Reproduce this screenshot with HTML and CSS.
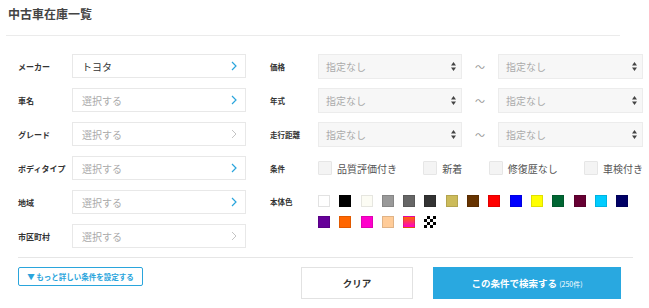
FILE: index.html
```html
<!DOCTYPE html>
<html lang="ja">
<head>
  <meta charset="UTF-8">
  <title>中古車在庫一覧</title>
  <link rel="stylesheet" href="styles.css">
</head>
<body>

  <div class="page-head">
    <h1>中古車在庫一覧</h1>
  </div>

  <form class="search-form">
    <div class="fields">

      <!-- left column -->
      <div class="col col-left">
        <div class="row">
          <span class="label">メーカー</span>
          <div class="picker">
            <span class="value">トヨタ</span>
            <svg class="chev" width="6" height="10" viewBox="0 0 6 10"><polyline points="1,1 5,5 1,9" fill="none" stroke="#2aa5dc" stroke-width="1.2"/></svg>
          </div>
        </div>
        <div class="row">
          <span class="label">車名</span>
          <div class="picker">
            <span class="placeholder">選択する</span>
            <svg class="chev" width="6" height="10" viewBox="0 0 6 10"><polyline points="1,1 5,5 1,9" fill="none" stroke="#2aa5dc" stroke-width="1.2"/></svg>
          </div>
        </div>
        <div class="row">
          <span class="label">グレード</span>
          <div class="picker">
            <span class="placeholder">選択する</span>
            <svg class="chev" width="6" height="10" viewBox="0 0 6 10"><polyline points="1,1 5,5 1,9" fill="none" stroke="#c4c4c4" stroke-width="1"/></svg>
          </div>
        </div>
        <div class="row">
          <span class="label">ボディタイプ</span>
          <div class="picker">
            <span class="placeholder">選択する</span>
            <svg class="chev" width="6" height="10" viewBox="0 0 6 10"><polyline points="1,1 5,5 1,9" fill="none" stroke="#2aa5dc" stroke-width="1.2"/></svg>
          </div>
        </div>
        <div class="row">
          <span class="label">地域</span>
          <div class="picker">
            <span class="placeholder">選択する</span>
            <svg class="chev" width="6" height="10" viewBox="0 0 6 10"><polyline points="1,1 5,5 1,9" fill="none" stroke="#2aa5dc" stroke-width="1.2"/></svg>
          </div>
        </div>
        <div class="row">
          <span class="label">市区町村</span>
          <div class="picker">
            <span class="placeholder">選択する</span>
            <svg class="chev" width="6" height="10" viewBox="0 0 6 10"><polyline points="1,1 5,5 1,9" fill="none" stroke="#c4c4c4" stroke-width="1"/></svg>
          </div>
        </div>
      </div>

      <!-- right column -->
      <div class="col col-right">
        <div class="row">
          <span class="label label-sm">価格</span>
          <div class="select">
            <span class="placeholder">指定なし</span>
            <svg class="updown" width="5" height="9" viewBox="0 0 5 9"><polygon points="2.5,0 5,3.5 0,3.5" fill="#444"/><polygon points="0,5.5 5,5.5 2.5,9" fill="#444"/></svg>
          </div>
          <span class="tilde">～</span>
          <div class="select select-wide">
            <span class="placeholder">指定なし</span>
            <svg class="updown" width="5" height="9" viewBox="0 0 5 9"><polygon points="2.5,0 5,3.5 0,3.5" fill="#444"/><polygon points="0,5.5 5,5.5 2.5,9" fill="#444"/></svg>
          </div>
        </div>
        <div class="row">
          <span class="label label-sm">年式</span>
          <div class="select">
            <span class="placeholder">指定なし</span>
            <svg class="updown" width="5" height="9" viewBox="0 0 5 9"><polygon points="2.5,0 5,3.5 0,3.5" fill="#444"/><polygon points="0,5.5 5,5.5 2.5,9" fill="#444"/></svg>
          </div>
          <span class="tilde">～</span>
          <div class="select select-wide">
            <span class="placeholder">指定なし</span>
            <svg class="updown" width="5" height="9" viewBox="0 0 5 9"><polygon points="2.5,0 5,3.5 0,3.5" fill="#444"/><polygon points="0,5.5 5,5.5 2.5,9" fill="#444"/></svg>
          </div>
        </div>
        <div class="row">
          <span class="label label-sm">走行距離</span>
          <div class="select">
            <span class="placeholder">指定なし</span>
            <svg class="updown" width="5" height="9" viewBox="0 0 5 9"><polygon points="2.5,0 5,3.5 0,3.5" fill="#444"/><polygon points="0,5.5 5,5.5 2.5,9" fill="#444"/></svg>
          </div>
          <span class="tilde">～</span>
          <div class="select select-wide">
            <span class="placeholder">指定なし</span>
            <svg class="updown" width="5" height="9" viewBox="0 0 5 9"><polygon points="2.5,0 5,3.5 0,3.5" fill="#444"/><polygon points="0,5.5 5,5.5 2.5,9" fill="#444"/></svg>
          </div>
        </div>
        <div class="row">
          <span class="label label-sm">条件</span>
          <div class="checks">
            <label class="check"><span class="box"></span>品質評価付き</label>
            <label class="check"><span class="box"></span>新着</label>
            <label class="check"><span class="box"></span>修復歴なし</label>
            <label class="check"><span class="box"></span>車検付き</label>
          </div>
        </div>
        <div class="row row-colors">
          <span class="label label-sm">本体色</span>
          <div class="swatches">
            <span class="swatch c-white"></span>
            <span class="swatch c-black"></span>
            <span class="swatch c-pearl"></span>
            <span class="swatch c-silver"></span>
            <span class="swatch c-gray"></span>
            <span class="swatch c-dark"></span>
            <span class="swatch c-gold"></span>
            <span class="swatch c-brown"></span>
            <span class="swatch c-red"></span>
            <span class="swatch c-blue"></span>
            <span class="swatch c-yellow"></span>
            <span class="swatch c-green"></span>
            <span class="swatch c-wine"></span>
            <span class="swatch c-sky"></span>
            <span class="swatch c-navy"></span>
            <span class="swatch c-purple"></span>
            <span class="swatch c-orange"></span>
            <span class="swatch c-pink"></span>
            <span class="swatch c-beige"></span>
            <span class="swatch c-multi"></span>
            <span class="swatch c-other"></span>
          </div>
        </div>
      </div>
    </div>

    <div class="actions">
      <button type="button" class="btn-more">▼ もっと詳しい条件を設定する</button>
      <button type="button" class="btn-clear">クリア</button>
      <button type="button" class="btn-search">この条件で検索する <small>(250件)</small></button>
    </div>
  </form>

</body>
</html>
```

FILE: styles.css
```css
/* Reset */
* {
  margin: 0;
  padding: 0;
  box-sizing: border-box;
}

body {
  font-family: 'Noto Sans CJK JP', 'Noto Sans', sans-serif;
  color: #333;
  background: #fff;
  width: 649px;
}

/* Header */
.page-head {
  margin-left: 6px;
  width: 614px;
  padding: 4px 0 11px 2px;
  border-bottom: 1px solid #ebebeb;
}

.page-head h1 {
  font-size: 12px;
  line-height: 20px;
  font-weight: bold;
  color: #444;
}

/* Form */
.search-form {
  padding-left: 18px;
  margin-top: 18px;
}

.fields {
  display: flex;
  gap: 24px;
  padding-bottom: 9px;
  border-bottom: 1px solid #e6e6e6;
  width: 615px;
}

.col {
  display: flex;
  flex-direction: column;
  gap: 10px;
}

.row {
  display: flex;
  align-items: center;
  height: 24px;
}

.label {
  width: 54px;
  flex-shrink: 0;
  font-size: 8px;
  font-weight: bold;
  color: #333;
}

.label-sm {
  width: 48px;
  font-size: 7.5px;
}

/* Picker inputs (left) */
.picker {
  width: 174px;
  height: 24px;
  border: 1px solid #e8e8e8;
  background: #fff;
  display: flex;
  align-items: center;
  justify-content: space-between;
  padding: 0 8px 0 9px;
}

.value {
  font-size: 10px;
  color: #333;
}

.placeholder {
  font-size: 10px;
  color: #aaa;
}

/* Selects (right) */
.select {
  width: 144px;
  height: 25px;
  border: 1px solid #ececec;
  background: #f7f7f7;
  display: flex;
  align-items: center;
  justify-content: space-between;
  padding: 0 5px 0 7px;
}

.select-wide {
  width: 145px;
}

.tilde {
  width: 36px;
  text-align: center;
  font-size: 10px;
  color: #999;
}

/* Checkboxes */
.checks {
  width: 325px;
  display: flex;
  justify-content: space-between;
}

.check {
  display: flex;
  align-items: center;
  gap: 5px;
  font-size: 10px;
  color: #555;
}

.box {
  width: 14px;
  height: 14px;
  border: 1px solid #e6e6e6;
  background: #f4f4f4;
  border-radius: 1px;
}

/* Colour swatches */
.row-colors {
  align-items: flex-start;
  height: auto;
}

.row-colors .label {
  line-height: 24px;
}

.swatches {
  width: 320px;
  padding-top: 5px;
  display: flex;
  flex-wrap: wrap;
  gap: 9px 9.3px;
}

.swatch {
  width: 12px;
  height: 12px;
  border: 1px solid rgba(0, 0, 0, 0.12);
}

.c-white { background: #fff; border-color: #e2e2e2; }
.c-black { background: #000; }
.c-pearl { background: #fcfcf4; border-color: #e6e6e0; }
.c-silver { background: #999; }
.c-gray { background: #666; }
.c-dark { background: #333; }
.c-gold { background: #ccbb5a; }
.c-brown { background: #663300; }
.c-red { background: #ff0000; }
.c-blue { background: #0000ff; }
.c-yellow { background: #ffff00; }
.c-green { background: #006633; }
.c-wine { background: #660033; }
.c-sky { background: #00ccff; }
.c-navy { background: #000066; }
.c-purple { background: #660099; }
.c-orange { background: #ff6600; }
.c-pink { background: #ff00cc; }
.c-beige { background: #ffcc99; }
.c-multi { background: linear-gradient(#ff6600, #ff00cc); }
.c-other {
  border: none;
  background: repeating-conic-gradient(#000 0 25%, #fff 0 50%) 0 0 / 6px 6px;
}

/* Buttons */
.actions {
  display: flex;
  align-items: flex-start;
  padding-top: 9px;
}

button {
  font-family: inherit;
  cursor: pointer;
}

.btn-more {
  width: 125px;
  height: 19px;
  border: 1px solid #2aa5dc;
  border-radius: 2px;
  background: #fff;
  color: #2aa5dc;
  font-size: 7.5px;
  font-weight: bold;
}

.btn-clear {
  margin-left: 158px;
  width: 112px;
  height: 32px;
  border: 1px solid #e2e2e2;
  background: #fff;
  color: #333;
  font-size: 9.5px;
  font-weight: bold;
}

.btn-search {
  margin-left: 20px;
  width: 188px;
  height: 32px;
  border: none;
  background: #29a8e0;
  color: #fff;
  font-size: 9.5px;
  font-weight: bold;
}

.btn-search small {
  font-size: 7px;
  font-weight: normal;
}
```
